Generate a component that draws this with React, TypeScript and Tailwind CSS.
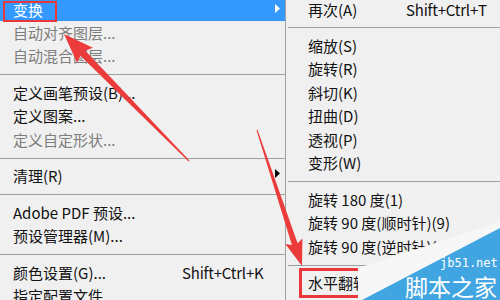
import React from "react";

type Item =
  | { sep: true }
  | {
      sep?: false;
      label: string;
      shortcut?: string;
      disabled?: boolean;
      sub?: boolean;
      active?: boolean;
      first?: boolean;
    };

const FONT = { fontFamily: '"Noto Sans CJK SC", "Noto Sans", sans-serif' };

function Tri({ color }: { color: string }) {
  return (
    <svg width="5" height="9" viewBox="0 0 5 9" className="absolute right-[5px] top-[calc(50%-7px)]">
      <polygon points="0,0 5,4.5 0,9" fill={color} />
    </svg>
  );
}

function Menu({ items, labelW, pl }: { items: Item[]; labelW: string; pl: string }) {
  return (
    <div className="flex flex-col">
      {items.map((it, i) =>
        it.sep ? (
          <div key={i} className="h-[13px] flex items-center">
            <div className="h-px w-full bg-[#a0a0a0]" />
          </div>
        ) : (
          <div
            key={i}
            className={
              (it.first ? "h-[21px] " : "h-[23.5px] ") +
              (it.active ? "bg-[#3399ff] text-white " : it.disabled ? "text-[#7d7d7d] " : "text-[#111] ") +
              "relative flex items-center whitespace-nowrap " +
              pl
            }
          >
            <span className={labelW + " shrink-0"}>{it.label}</span>
            {it.shortcut && <span className="shrink-0 tracking-[-0.2px]">{it.shortcut}</span>}
            {it.sub && <Tri color={it.active ? "#ffffff" : "#000000"} />}
          </div>
        )
      )}
    </div>
  );
}

function arrowPoints(
  tip: [number, number],
  tail: [number, number],
  headLen: number,
  headHalf: number,
  shaftW: number,
  tailW: number
) {
  const dx = tail[0] - tip[0];
  const dy = tail[1] - tip[1];
  const len = Math.hypot(dx, dy);
  const ux = dx / len;
  const uy = dy / len;
  const nx = -uy;
  const ny = ux;
  const bx = tip[0] + ux * headLen;
  const by = tip[1] + uy * headLen;
  const pts: [number, number][] = [
    tip,
    [bx + nx * headHalf + ux * 3, by + ny * headHalf + uy * 3],
    [bx + nx * shaftW / 2, by + ny * shaftW / 2],
    [tail[0] + nx * tailW / 2, tail[1] + ny * tailW / 2],
    [tail[0] - nx * tailW / 2, tail[1] - ny * tailW / 2],
    [bx - nx * shaftW / 2, by - ny * shaftW / 2],
    [bx - nx * headHalf + ux * 3, by - ny * headHalf + uy * 3],
  ];
  return pts.map((p) => p[0].toFixed(1) + "," + p[1].toFixed(1)).join(" ");
}

export default function App() {
  const left: Item[] = [
    { label: "变换", active: true, sub: true, first: true },
    { label: "自动对齐图层...", disabled: true },
    { label: "自动混合图层...", disabled: true },
    { sep: true },
    { label: "定义画笔预设(B)..." },
    { label: "定义图案..." },
    { label: "定义自定形状...", disabled: true },
    { sep: true },
    { label: "清理(R)", sub: true },
    { sep: true },
    { label: "Adobe PDF 预设..." },
    { label: "预设管理器(M)..." },
    { sep: true },
    { label: "颜色设置(G)...", shortcut: "Shift+Ctrl+K" },
    { label: "指定配置文件..." },
  ];
  const right: Item[] = [
    { label: "再次(A)", shortcut: "Shift+Ctrl+T", first: true },
    { sep: true },
    { label: "缩放(S)" },
    { label: "旋转(R)" },
    { label: "斜切(K)" },
    { label: "扭曲(D)" },
    { label: "透视(P)" },
    { label: "变形(W)" },
    { sep: true },
    { label: "旋转 180 度(1)" },
    { label: "旋转 90 度(顺时针)(9)" },
    { label: "旋转 90 度(逆时针)(0)" },
    { sep: true },
    { label: "水平翻转(H)" },
  ];

  return (
    <div className="relative w-[500px] h-[300px] overflow-hidden bg-[#f0f0f0] text-[15px] flex" style={FONT}>
      <div className="w-[285px] shrink-0">
        <Menu items={left} labelW="w-[169px]" pl="pl-[13px]" />
      </div>
      <div className="w-px shrink-0 bg-[#a0a0a0]" />
      <div className="flex-1 pl-[2px]">
        <div className="w-[240px]">
          <Menu items={right} labelW="w-[98px]" pl="pl-[20px]" />
        </div>
      </div>

      {/* red boxes */}
      <div className="absolute left-[3px] top-[1px] w-[54px] h-[21px] border-2 border-[#e8383b]" />
      <div className="absolute left-[299px] top-[268px] w-[72px] h-[30px] border-[3px] border-[#e8383b]" />

      {/* arrows + watermark */}
      <svg className="absolute left-0 top-0" width="500" height="300" viewBox="0 0 500 300">
        <polygon points={arrowPoints([64, 34], [189, 161], 27, 11, 7, 1)} fill="#ec3b3b" />
        <polygon points={arrowPoints([302, 266], [257, 130], 23, 9, 6, 1)} fill="#ec3b3b" />
        <polygon points="358,268 500,222 500,300 358,300" fill="#f7f7f7" />
        <polygon points="362,300 500,228 500,300" fill="#41a5e1" />
      </svg>
      <div
        className="absolute left-[440px] top-[256px] text-[12px] leading-[14px] text-white"
        style={{ fontFamily: '"DejaVu Sans Mono", monospace' }}
      >
        jb51.net
      </div>
      <div className="absolute left-[405px] top-[274px] text-[23px] leading-[25px] text-white">
        脚本之家
      </div>
    </div>
  );
}
